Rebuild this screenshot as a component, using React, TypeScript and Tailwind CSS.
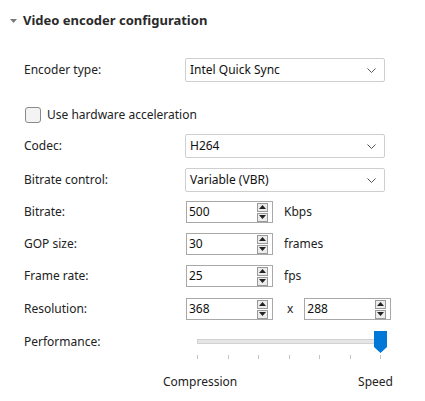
import React from 'react';

const font = { fontFamily: '"Noto Sans", "Segoe UI", Tahoma, sans-serif' };

function Chevron() {
    return (
        <svg width="9" height="5" viewBox="0 0 9 5" className="text-[#555]">
            <path d="M0.5 0.5 L4.5 4.5 L8.5 0.5" fill="none" stroke="currentColor" strokeWidth="1" />
        </svg>
    );
}

function Select({ value }: { value: string }) {
    return (
        <div className="w-[200px] h-[24px] border border-[#cfcfcf] rounded-[2px] bg-white flex items-center justify-between pl-[4px] pr-[8px] text-[12px] text-[#111]">
            <span>{value}</span>
            <Chevron />
        </div>
    );
}

function Spin({ value }: { value: string }) {
    return (
        <div className="w-[87px] h-[22px] border border-[#a8a8a8] bg-white flex items-center justify-between pl-[2px] pr-[4px] text-[12px] text-[#111]">
            <span>{value}</span>
            <div className="flex flex-col gap-[1px]">
                <div className="w-[11px] h-[9px] border border-[#9a9a9a] bg-[#ececec] flex items-center justify-center">
                    <svg width="7" height="4" viewBox="0 0 7 4"><path d="M0 4 L3.5 0 L7 4 Z" fill="#222" /></svg>
                </div>
                <div className="w-[11px] h-[9px] border border-[#9a9a9a] bg-[#ececec] flex items-center justify-center">
                    <svg width="7" height="4" viewBox="0 0 7 4"><path d="M0 0 L3.5 4 L7 0 Z" fill="#222" /></svg>
                </div>
            </div>
        </div>
    );
}

function Row({ label, children, className }: { label: string; children: React.ReactNode; className: string }) {
    return (
        <div className={`flex items-center ${className}`}>
            <div className="w-[161px] text-[12px] text-[#222]">{label}</div>
            {children}
        </div>
    );
}

export default function App() {
    const ticks = [0, 1, 2, 3, 4, 5, 6];
    return (
        <div className="w-[425px] h-[401px] bg-white overflow-hidden pt-[12px]" style={font}>
            <div className="flex items-center h-[18px] pl-[10px]">
                <svg width="7" height="4" viewBox="0 0 7 4" className="mr-[6px]"><path d="M0 0 L3.5 4 L7 0 Z" fill="#7a7a7a" /></svg>
                <span className="text-[13px] font-bold text-[#2a2a2a]">Video encoder configuration</span>
            </div>

            <div className="pl-[24px]">
                <Row label="Encoder type:" className="mt-[28px] h-[24px]">
                    <Select value="Intel Quick Sync" />
                </Row>

                <div className="mt-[25px] h-[16px] flex items-center">
                    <div className="w-[16px] h-[16px] ml-[1px] border border-[#8a8a8a] rounded-[3px] bg-[#f3f3f3]" />
                    <span className="ml-[6px] text-[12px] text-[#222]">Use hardware acceleration</span>
                </div>

                <Row label="Codec:" className="mt-[11px] h-[24px]">
                    <Select value="H264" />
                </Row>
                <Row label="Bitrate control:" className="mt-[10px] h-[24px]">
                    <Select value="Variable (VBR)" />
                </Row>

                <Row label="Bitrate:" className="mt-[9px] h-[22px]">
                    <div className="ml-[1px]"><Spin value="500" /></div>
                    <span className="ml-[11px] text-[12px] text-[#222]">Kbps</span>
                </Row>
                <Row label="GOP size:" className="mt-[10px] h-[22px]">
                    <div className="ml-[1px]"><Spin value="30" /></div>
                    <span className="ml-[11px] text-[12px] text-[#222]">frames</span>
                </Row>
                <Row label="Frame rate:" className="mt-[10px] h-[22px]">
                    <div className="ml-[1px]"><Spin value="25" /></div>
                    <span className="ml-[11px] text-[12px] text-[#222]">fps</span>
                </Row>
                <Row label="Resolution:" className="mt-[11px] h-[22px]">
                    <div className="ml-[1px]"><Spin value="368" /></div>
                    <span className="ml-[14px] text-[12px] text-[#222]">x</span>
                    <div className="ml-[11px]"><Spin value="288" /></div>
                </Row>

                <Row label="Performance:" className="mt-[11px] h-[22px]">
                    <div className="ml-[12px] w-[190px] h-[22px] relative">
                        <div className="absolute left-0 right-0 top-[8px] h-[5px] bg-[#e6e6e6] border border-[#d2d2d2]" />
                        <svg width="13" height="22" viewBox="0 0 13 22" className="absolute right-0 top-0">
                            <path d="M0 0 H13 V16 L6.5 22 L0 16 Z" fill="#0078d7" />
                        </svg>
                    </div>
                </Row>
                <div className="ml-[173px] w-[184px] mt-[2px] h-[4px] flex justify-between">
                    {ticks.map((t) => (
                        <div key={t} className="w-[1px] h-[4px] bg-[#c4c4c4]" />
                    ))}
                </div>
            </div>

            <div className="mt-[14px] ml-[163px] w-[230px] flex justify-between text-[12px] text-[#222]">
                <span>Compression</span>
                <span>Speed</span>
            </div>
        </div>
    );
}
